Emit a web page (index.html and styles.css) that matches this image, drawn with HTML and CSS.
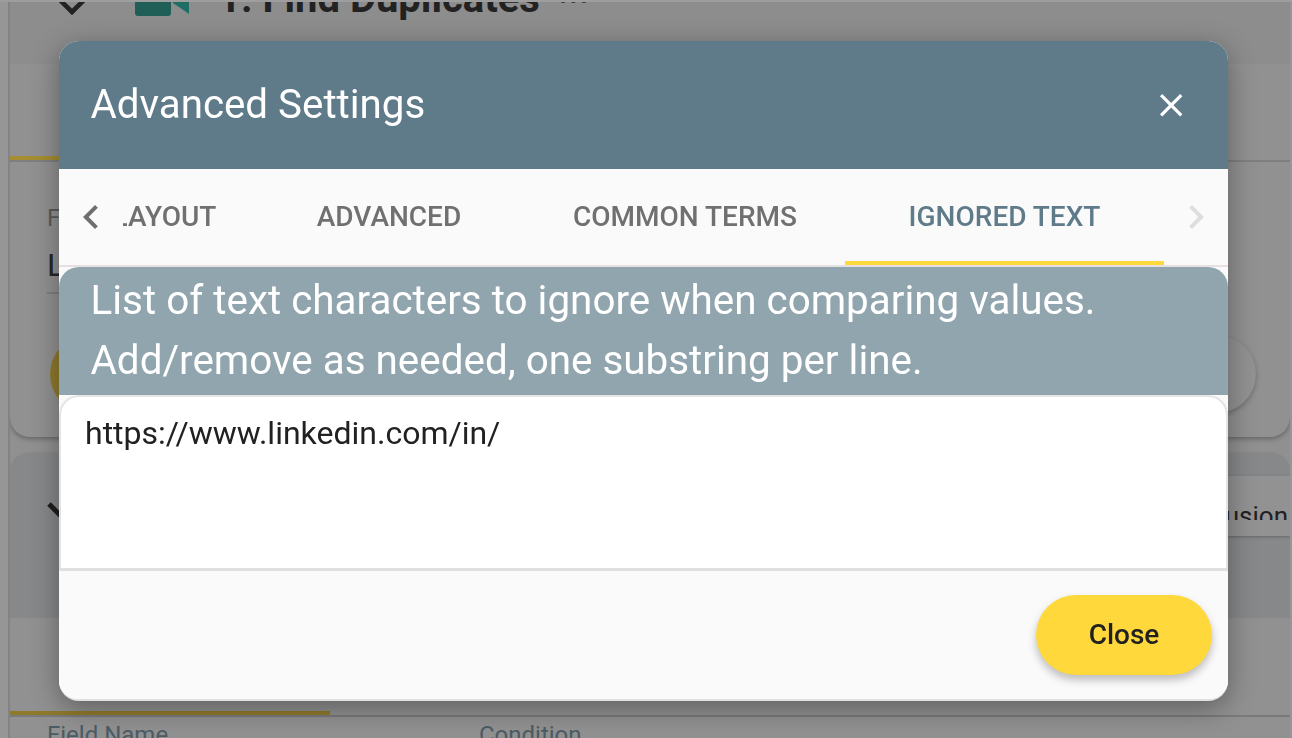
FILE: index.html
```html
<!DOCTYPE html>
<html lang="en">
<head>
<meta charset="utf-8">
<title>Advanced Settings</title>
<link rel="stylesheet" href="styles.css">
</head>
<body>
<div class="window">
  <main class="sheet">
    <section class="card card-first">
      <header class="card-head">
        <svg class="head-chevron" viewBox="0 0 28 16"><path d="M2 1l12 12L26 1" fill="none" stroke="#222" stroke-width="4.6"/></svg>
        <svg class="head-logo" viewBox="0 0 54 16"><rect x="0" y="-10" width="36" height="25" rx="3" fill="#1f5f58"/><path d="M38 2l16 11V0H38z" fill="#1f6e66"/></svg>
        <h1 class="head-title">1. Find Duplicates</h1>
        <span class="head-more">...</span>
      </header>
      <div class="bg-tabs"><span class="bg-tab-mark"></span></div>
      <div class="bg-fields">
        <div class="bg-label">Field</div>
        <div class="bg-value">L</div>
      </div>
      <div class="bg-actions">
        <span class="bg-pill bg-pill-yellow"></span>
        <span class="bg-pill bg-pill-grey"></span>
      </div>
    </section>
    <section class="card card-second">
      <div class="second-head">
        <svg class="second-chevron" viewBox="0 0 40 24"><path d="M3 2l17 17L37 2" fill="none" stroke="#1e1e1e" stroke-width="5"/></svg>
        <div class="chip"><span class="chip-text">Inclusion</span></div>
      </div>
      <div class="second-tabs"><span class="second-tab-mark"></span></div>
      <div class="second-columns"><span class="col-field">Field Name</span><span class="col-cond">Condition</span></div>
    </section>
  </main>

  <div class="dialog" role="dialog" aria-label="Advanced Settings">
    <header class="dialog-head">
      <h2 class="dialog-title">Advanced Settings</h2>
      <svg class="close-icon" viewBox="0 0 24 24"><path d="M19 6.41L17.59 5 12 10.59 6.41 5 5 6.41 10.59 12 5 17.59 6.41 19 12 13.41 17.59 19 19 17.59 13.41 12z" fill="#fff"/></svg>
    </header>
    <nav class="tabs">
      <span class="scroll-btn"><svg viewBox="0 0 24 24"><path d="M15.41 7.41L14 6l-6 6 6 6 1.41-1.41L10.83 12z" fill="#6e6e6e"/></svg></span>
      <div class="tab-scroller">
        <span class="tab tab-layout">LAYOUT</span>
        <span class="tab tab-advanced">ADVANCED</span>
        <span class="tab tab-common">COMMON TERMS</span>
        <span class="tab tab-ignored">IGNORED TEXT</span>
      </div>
      <span class="scroll-btn"><svg viewBox="0 0 24 24"><path d="M10 6L8.59 7.41 13.17 12l-4.58 4.59L10 18l6-6z" fill="#dedede"/></svg></span>
    </nav>
    <div class="banner">
      <p class="banner-text">List of text characters to ignore when comparing values.<br>Add/remove as needed, one substring per line.</p>
    </div>
    <div class="text-box">https://www.linkedin.com/in/</div>
    <footer class="dialog-foot">
      <button class="close-btn" type="button">Close</button>
    </footer>
  </div>
</div>
</body>
</html>
```
FILE: styles.css
```css
* { box-sizing: border-box; }
html, body { margin: 0; padding: 0; }
body { font-family: Roboto, "Liberation Sans", sans-serif; background: #919191; }

.window {
  position: relative;
  width: 1292px;
  height: 738px;
  overflow: hidden;
  background: #969696;
  border-top: 2px solid #9e9e9e;
}
.sheet {
  height: 736px;
  margin-left: 8px;
  margin-right: 2px;
  border-left: 2px solid #838383;
  overflow: hidden;
  background: #909090;
}
.card-first {
  height: 435px;
  background: #919191;
  border-radius: 0 0 20px 20px;
  box-shadow: 0 2px 5px rgba(0,0,0,.3);
}
.card-head {
  height: 62px;
  display: flex;
  align-items: flex-start;
  background: #8d8d8e;
  overflow: hidden;
}
.head-chevron { width: 28px; height: 16px; margin: -3px 0 0 48px; flex: none; }
.head-logo { width: 54px; height: 16px; margin: -1px 0 0 49px; flex: none; }
.head-title {
  margin: -24px 0 0 29px;
  font-size: 40px;
  line-height: 42px;
  font-weight: 700;
  color: #222;
  white-space: nowrap;
}
.head-more { margin: -27px 0 0 18px; font-size: 36px; line-height: 32px; font-weight: 700; color: #333; }

.bg-tabs { height: 98px; border-bottom: 2px solid #7f7f7f; display: flex; align-items: flex-end; }
.bg-tab-mark { width: 320px; height: 4px; background: #a58e31; }
.bg-fields { height: 173px; padding: 42px 0 0 37px; }
.bg-label { font-size: 24px; line-height: 28px; color: #5b5b5b; }
.bg-value { font-size: 32px; line-height: 40px; margin-top: 13px; color: #262626; padding-bottom: 7px; border-bottom: 2px solid #7f7f7f; width: 300px; }
.bg-actions { display: flex; justify-content: space-between; padding: 0 34px 0 40px; }
.bg-pill { display: block; width: 176px; height: 78px; border-radius: 40px; }
.bg-pill-yellow { background: #8f7a2c; }
.bg-pill-grey { background: #929292; box-shadow: 0 2px 5px rgba(0,0,0,.25); }

.card-second {
  margin-top: 16px;
  border-radius: 20px 20px 0 0;
  overflow: hidden;
  background: #919191;
  box-shadow: 0 0 2px rgba(0,0,0,.15);
}
.second-head { height: 165px; background: #87888a; padding: 23px 0 0 0; display: flex; justify-content: space-between; }
.second-chevron { width: 40px; height: 24px; margin: 26px 0 0 36px; flex: none; }
.chip { width: 160px; height: 60px; background: #929292; box-shadow: 0 1px 3px rgba(0,0,0,.25); padding: 25px 0 0 0; text-align: right; }
.chip-text { display: block; height: 19px; overflow: hidden; font-size: 26px; line-height: 30px; color: #202020; padding-right: 2px; }
.second-tabs { height: 99px; border-bottom: 2px solid #7a7a7a; display: flex; align-items: flex-end; }
.second-tab-mark { width: 320px; height: 4px; background: #8f7a2c; }
.second-columns { display: flex; padding: 4px 0 0 37px; font-size: 24px; line-height: 28px; color: #4c5c65; white-space: nowrap; }
.col-field { width: 432px; }

.dialog {
  position: absolute;
  left: 59px;
  top: 39px;
  width: 1169px;
  height: 660px;
  display: flex;
  flex-direction: column;
  background: #fafafa;
  border-radius: 20px;
  overflow: hidden;
  border-bottom: 2px solid #e0e0e0;
  filter: drop-shadow(0 7px 14px rgba(0,0,0,.35));
}
.dialog-head {
  flex: none;
  height: 128px;
  padding: 0 38px 0 31.5px;
  display: flex;
  align-items: center;
  justify-content: space-between;
  background: #5f7b8a;
}
.dialog-title { margin: 0; font-size: 40.3px; font-weight: 400; line-height: 42px; color: #fff; white-space: nowrap; }
.close-icon { width: 38.4px; height: 38.4px; flex: none; }

.tabs {
  flex: none;
  height: 98px;
  display: flex;
  background: #fafafa;
  border-bottom: 2px solid #e6e0e2;
}
.scroll-btn { flex: none; width: 64px; display: flex; align-items: center; justify-content: center; }
.scroll-btn svg { width: 48px; height: 48px; }
.tab-scroller { flex: 1; display: flex; overflow: hidden; min-width: 0; }
.tab {
  flex: none;
  height: 96px;
  padding-bottom: 2px;
  display: flex;
  align-items: center;
  justify-content: center;
  font-size: 28px;
  font-weight: 500;
  color: #707070;
  white-space: nowrap;
}
.tab-layout { width: 181px; margin-left: -51px; padding-left: 4px; }
.tab-advanced { width: 272px; }
.tab-common { width: 320px; }
.tab-ignored { width: 319px; color: #5f7b8a; border-bottom: 4px solid #ffd83b; padding-top: 2px; padding-bottom: 0; }

.banner {
  flex: none;
  height: 128px;
  padding: 4px 31.5px 0;
  background: #91a5ae;
  border-radius: 20px 20px 0 0;
}
.banner-text { margin: 0; font-size: 40.4px; line-height: 60px; color: #fff; white-space: nowrap; }

.text-box {
  flex: none;
  height: 176px;
  padding: 16px 24px;
  background: #fff;
  border: 2px solid #e4e4e4;
  border-radius: 20px 20px 16px 16px / 20px 20px 3px 3px;
  font-size: 32px;
  line-height: 40px;
  color: #212121;
}
.dialog-foot {
  flex: 1;
  margin-top: -3px;
  border-top: 3px solid #e0e0e0;
  display: flex;
  align-items: flex-start;
  justify-content: flex-end;
  padding: 24px 16px 0 0;
  background: #fafafa;
}
.close-btn {
  width: 176px;
  height: 80px;
  padding: 0 0 2px;
  border: 0;
  border-radius: 40px;
  background: #ffd83b;
  color: #212121;
  font-family: inherit;
  font-size: 28px;
  font-weight: 500;
  box-shadow: 0 5px 9px rgba(0,0,0,.25);
}
```
